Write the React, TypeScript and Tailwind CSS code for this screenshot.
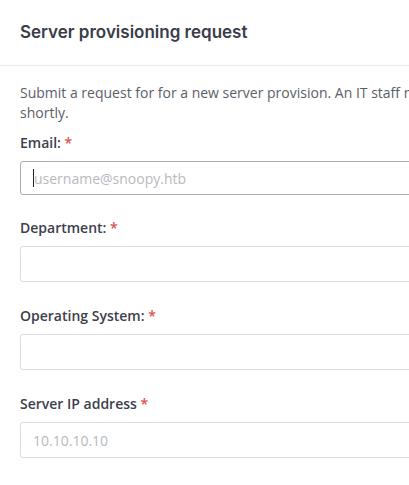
import React from "react";

const Label = ({ text }: { text: string }) => (
  <label className="block h-5 text-[14px] leading-5 font-semibold text-[#3d404c] whitespace-nowrap">
    {text} <span className="text-[#d9534f]">*</span>
  </label>
);

export default function App() {
  return (
    <div className="w-[409px] h-[485px] overflow-hidden bg-white" style={{ fontFamily: '"Open Sans", sans-serif' }}>
      <div className="w-[640px]">
        <div className="h-[66px] flex items-center px-5 pt-[1px] border-b border-[#e9eaec]">
          <h1 className="text-[17px] font-semibold text-[#3a3d49]" style={{ fontFamily: 'Inter, sans-serif' }}>
            Server provisioning request
          </h1>
        </div>
        <div className="px-5 pt-[17px]">
          <p className="text-[14px] leading-5 text-[#5b5e68] whitespace-nowrap">
            Submit a request for for a new server provision. An IT staff member will contact you
            <br />
            shortly.
          </p>
          <div className="mt-[10px] flex flex-col">
            <Label text="Email:" />
            <div className="mt-2 h-[34px] w-[600px] rounded-[3px] border border-[#a9abb0] flex items-center pl-3">
              <span className="w-px h-[18px] bg-[#222]" />
              <span className="text-[14px] text-[#b7b9be]">username@snoopy.htb</span>
            </div>
          </div>
          <div className="mt-[23px] flex flex-col">
            <Label text="Department:" />
            <div className="mt-2 h-[36px] w-[600px] rounded-[3px] border border-[#dcdde0]" />
          </div>
          <div className="mt-[24px] flex flex-col">
            <Label text="Operating System:" />
            <div className="mt-2 h-[36px] w-[600px] rounded-[3px] border border-[#dcdde0]" />
          </div>
          <div className="mt-[24px] flex flex-col">
            <label className="block h-5 text-[14px] leading-5 font-semibold text-[#3d404c] whitespace-nowrap">
              Server IP address <span className="text-[#d9534f]">*</span>
            </label>
            <div className="mt-2 h-[36px] w-[600px] rounded-[3px] border border-[#dcdde0] flex items-center pl-3">
              <span className="text-[14px] text-[#b7b9be]">10.10.10.10</span>
            </div>
          </div>
        </div>
      </div>
    </div>
  );
}
